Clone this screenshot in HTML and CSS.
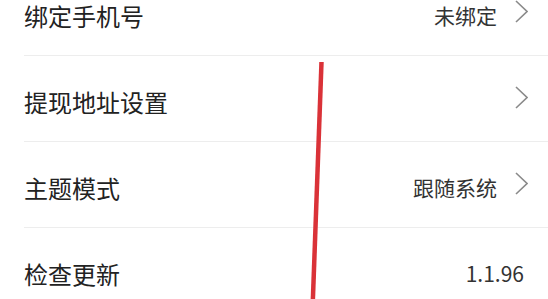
FILE: index.html
```html
<!DOCTYPE html>
<html lang="zh-CN">
<head>
    <meta charset="UTF-8">
    <meta name="viewport" content="width=device-width, initial-scale=1.0">
    <title>设置</title>
    <link rel="stylesheet" href="styles.css">
</head>
<body>
    <div class="settings">
        <div class="row">
            <span class="label">绑定手机号</span>
            <span class="value">未绑定</span>
            <svg class="arrow" viewBox="0 0 13 23"><path d="M1 1 L12 11.5 L1 22"/></svg>
        </div>
        <div class="row">
            <span class="label">提现地址设置</span>
            <svg class="arrow" viewBox="0 0 13 23"><path d="M1 1 L12 11.5 L1 22"/></svg>
        </div>
        <div class="row">
            <span class="label">主题模式</span>
            <span class="value">跟随系统</span>
            <svg class="arrow" viewBox="0 0 13 23"><path d="M1 1 L12 11.5 L1 22"/></svg>
        </div>
        <div class="row row-version">
            <span class="label">检查更新</span>
            <span class="value">1.1.96</span>
        </div>
    </div>

    <!-- red marker stroke drawn over the list -->
    <svg class="marker" viewBox="0 0 548 299">
        <line x1="321.5" y1="62" x2="312.5" y2="310"/>
    </svg>
</body>
</html>
```

FILE: styles.css
```css
body {
    margin: 0;
    background-color: #ffffff;
    font-family: "Noto Sans CJK SC", "Noto Sans", sans-serif;
    color: #222;
    overflow: hidden;
}
.settings {
    margin-top: -30px;
    margin-left: 24px;
}
.row {
    display: flex;
    align-items: center;
    height: 86px;
    padding-top: 5px;
    box-sizing: border-box;
    padding-right: 20px;
    border-bottom: 1.5px solid #ededed;
}
.label {
    flex: 1;
    font-size: 24px;
    color: #222;
}
.value {
    font-size: 21px;
    color: #333;
    margin-right: 18px;
}
.arrow {
    width: 13px;
    height: 23px;
    margin-top: -8px;
    fill: none;
    stroke: #8a8a8a;
    stroke-width: 1.6;
}
.row-version .value {
    margin-right: 4px;
}
.marker {
    position: absolute;
    top: 0;
    left: 0;
    width: 548px;
    height: 299px;
    pointer-events: none;
}
.marker line {
    stroke: #da3238;
    stroke-width: 4.5;
}
```
